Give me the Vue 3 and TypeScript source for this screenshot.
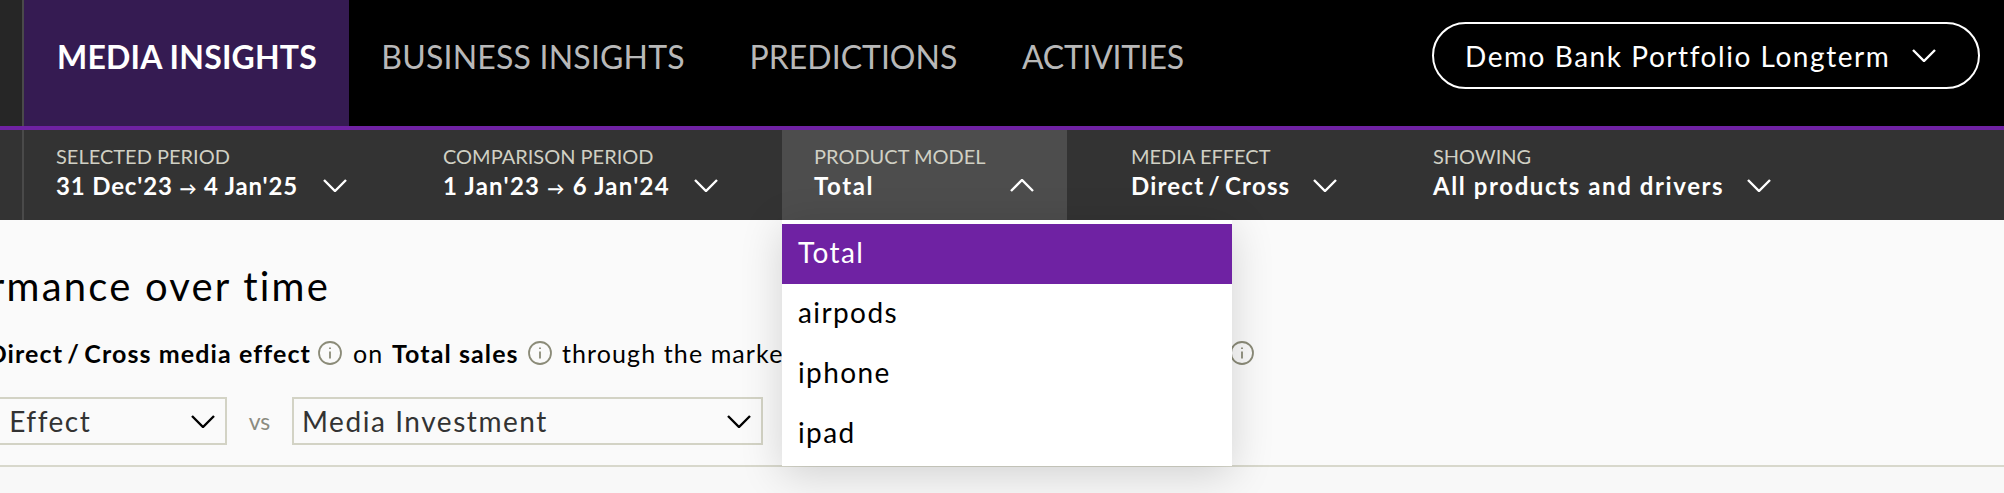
<script setup lang="ts">
interface FilterItem {
  label: string
  value: string
  width: number
  track: number
  gap: number
  open?: boolean
}

const tabs = ['MEDIA INSIGHTS', 'BUSINESS INSIGHTS', 'PREDICTIONS', 'ACTIVITIES']

const filters: FilterItem[] = [
  { label: 'SELECTED PERIOD', value: "31 Dec'23 → 4 Jan'25", width: 241, track: 0.85, gap: 26 },
  { label: 'COMPARISON PERIOD', value: "1 Jan'23 → 6 Jan'24", width: 225, track: 1.25, gap: 26 },
  { label: 'PRODUCT MODEL', value: 'Total', width: 59, track: 1.6, gap: 137, open: true },
  { label: 'MEDIA EFFECT', value: 'Direct\u2009/\u2009Cross', width: 156, track: 1.2, gap: 26 },
  { label: 'SHOWING', value: 'All products and drivers', width: 288, track: 1.6, gap: 26 }
]

const options = ['Total', 'airpods', 'iphone', 'ipad']

// the arrow between two dates is drawn smaller than the dates
const splitArrow = (value: string) => value.split('→')
</script>

<template>
  <div class="page">
    <header class="top">
      <div class="strip"></div>
      <nav class="tabs">
        <a v-for="(tab, i) in tabs" :key="tab" class="tab" :class="{ active: i === 0 }">{{ tab }}</a>
      </nav>
      <button class="portfolio">
        <span>Demo Bank Portfolio Longterm</span>
        <svg class="chev" viewBox="0 0 24 13"><path d="M1 1l11 11L23 1" /></svg>
      </button>
    </header>

    <section class="filters">
      <div class="strip light"></div>
      <div v-for="f in filters" :key="f.label" class="filter" :class="{ open: f.open }">
        <div class="label">{{ f.label }}</div>
        <div class="value">
          <span class="text" :style="{ width: f.width + 'px', letterSpacing: f.track + 'px' }">
            <template v-for="(part, i) in splitArrow(f.value)" :key="i">
              <span v-if="i > 0" class="arrow">→</span>{{ part }}
            </template>
          </span>
          <svg class="chev" :style="{ marginLeft: f.gap + 'px' }" viewBox="0 0 24 13">
            <path :d="f.open ? 'M1 12L12 1l11 11' : 'M1 1l11 11L23 1'" />
          </svg>
        </div>
        <ul v-if="f.open" class="menu">
          <li v-for="(o, i) in options" :key="o" :class="{ selected: i === 0 }">{{ o }}</li>
        </ul>
      </div>
    </section>

    <main class="content">
      <h2 class="title">Performance over time</h2>
      <div class="desc">
        <b class="effect">Showing Direct&#8201;/&#8201;Cross media effect</b>
        <svg class="info" viewBox="0 0 24 24"><circle cx="12" cy="12" r="11" /><path d="M12 10.5v7M12 6.5v1.6" /></svg>
        <span class="on">on</span>
        <b class="sales">Total sales</b>
        <svg class="info" viewBox="0 0 24 24"><circle cx="12" cy="12" r="11" /><path d="M12 10.5v7M12 6.5v1.6" /></svg>
        <span class="through">through the marketing channels over the period</span>
        <svg class="info" viewBox="0 0 24 24"><circle cx="12" cy="12" r="11" /><path d="M12 10.5v7M12 6.5v1.6" /></svg>
      </div>
      <div class="selects">
        <div class="select first">
          <span>Media Effect</span>
          <svg class="chev" viewBox="0 0 24 13"><path d="M1 1l11 11L23 1" /></svg>
        </div>
        <span class="vs">vs</span>
        <div class="select second">
          <span>Media Investment</span>
          <svg class="chev" viewBox="0 0 24 13"><path d="M1 1l11 11L23 1" /></svg>
        </div>
      </div>
    </main>
  </div>
</template>

<style>
html,
body {
  margin: 0;
  overflow: hidden;
  background: #f8f8f8;
}
</style>

<style scoped>
.page {
  width: 2004px;
  height: 493px;
  overflow: hidden;
  font-family: Lato, "Noto Sans", sans-serif;
  background: #f8f8f8;
}

.top {
  display: flex;
  align-items: center;
  height: 126px;
  background: #000;
  border-bottom: 4px solid #6f22a3;
}

.strip {
  align-self: stretch;
  flex: none;
  width: 22px;
  background: #262626;
  border-right: 2px solid #4a4a4a;
}

.strip.light {
  background: #333;
}

.tabs {
  display: flex;
  align-self: stretch;
}

.tab {
  display: flex;
  align-items: center;
  padding: 0 32.4px 14px;
  font-size: 32px;
  letter-spacing: 0.2px;
  color: #b8b8b8;
}

.tab:nth-child(3) {
  letter-spacing: 0;
}

.tab:last-child {
  letter-spacing: -0.3px;
}

.tab.active {
  padding: 0 32px 14px 33px;
  background: #351b52;
  color: #fff;
  font-weight: 700;
}

.portfolio {
  display: flex;
  align-items: center;
  justify-content: space-between;
  width: 548px;
  height: 67px;
  margin: 0 24px 15px auto;
  padding: 0 42px 0 31px;
  box-sizing: border-box;
  background: transparent;
  border: 2px solid #fff;
  border-radius: 34px;
  color: #fff;
  font-family: inherit;
  font-size: 28px;
  letter-spacing: 1.55px;
}

.chev {
  flex: none;
  width: 24px;
  height: 13px;
  fill: none;
  stroke: currentColor;
  stroke-width: 2.4;
}

.filters {
  display: flex;
  height: 90px;
  background: #333;
}

.filter {
  position: relative;
  padding: 13px 32px 0;
  color: #fff;
}

.filter + .filter {
  margin-left: 32px;
}

.filter.open {
  flex: none;
  width: 285px;
  box-sizing: border-box;
  background: #4d4d4d;
}

.label {
  font-size: 20px;
  line-height: 26px;
  color: #d0d0c4;
}

.value {
  display: flex;
  align-items: center;
  height: 33px;
  font-size: 24px;
  font-weight: 700;
  white-space: nowrap;
}

.value .text {
  flex: none;
}

.arrow {
  font-size: 17px;
}

.menu {
  position: absolute;
  top: 100%;
  left: 0;
  z-index: 5;
  width: 450px;
  height: 246px;
  margin: 0;
  padding: 4px 0 0;
  box-sizing: border-box;
  list-style: none;
  background: #fff;
  box-shadow: 0 8px 40px rgba(0, 0, 0, 0.16);
  color: #000;
  font-size: 28px;
  font-weight: 400;
  letter-spacing: 1.4px;
}

.menu li {
  height: 60px;
  padding-left: 16px;
  line-height: 56px;
}

.menu li.selected {
  background: #6f22a3;
  color: #fff;
  line-height: 57px;
}

.content {
  height: 247px;
  padding-top: 44px;
  box-sizing: border-box;
  background: #fafafa;
  border-bottom: 2px solid #d8d8cc;
}

.title {
  display: flex;
  justify-content: flex-end;
  width: 330px;
  margin: 0;
  font-size: 40px;
  font-weight: 400;
  line-height: 44px;
  letter-spacing: 2.2px;
  white-space: nowrap;
  color: #000;
}

.desc {
  display: flex;
  align-items: center;
  height: 24px;
  margin-top: 33px;
  font-size: 25px;
  letter-spacing: 1.1px;
  color: #000;
  white-space: nowrap;
}

.effect {
  display: flex;
  justify-content: flex-end;
  width: 311px;
  flex: none;
}

.info {
  flex: none;
  width: 24px;
  height: 24px;
  margin: 0 10px 0 7px;
  fill: none;
  stroke: #8b8b78;
  stroke-width: 1.8;
}

.on {
  flex: none;
  width: 29px;
  margin: 0 10px 0 1px;
}

.sales {
  flex: none;
  width: 129px;
}

.through {
  flex: none;
  width: 661px;
  overflow: hidden;
}

.selects {
  display: flex;
  align-items: center;
  margin-top: 32px;
  margin-left: -90px;
}

.select {
  display: flex;
  align-items: center;
  justify-content: space-between;
  height: 48px;
  box-sizing: border-box;
  padding: 0 10px 0 4px;
  background: #fafafa;
  border: 2px solid #d3d3c5;
  color: #333;
  font-size: 28px;
  letter-spacing: 1.55px;
}

.select .chev {
  color: #000;
}

.select.first {
  width: 317px;
}

.select.second {
  width: 471px;
  padding-left: 8px;
}

.vs {
  width: 65px;
  text-align: center;
  font-size: 23px;
  color: #8b8b80;
}
</style>
